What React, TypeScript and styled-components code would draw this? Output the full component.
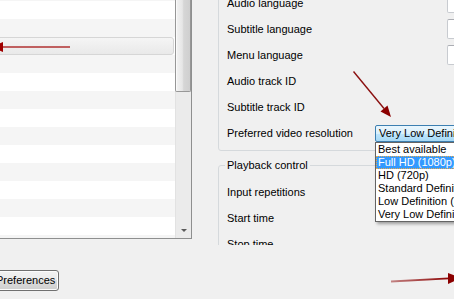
import React, { FC } from "react"
import styled, { createGlobalStyle } from "styled-components"

const GlobalStyle = createGlobalStyle`
  html, body {
    margin: 0;
    padding: 0;
    background: #f0f0f0;
  }
  body {
    font-family: "Liberation Sans", Arial, sans-serif;
    font-size: 11px;
    color: #000;
  }
`

const listShades = ["grey", "white", "grey", "selected", "grey", "white", "grey", "white", "grey", "white", "grey", "white", "grey", "white", "grey"]

const languageRows = [
  { label: "Audio language", control: "input" },
  { label: "Subtitle language", control: "input" },
  { label: "Menu language", control: "input" },
  { label: "Audio track ID", control: "none" },
  { label: "Subtitle track ID", control: "none" },
  { label: "Preferred video resolution", control: "combo" },
]

const playbackRows = ["Input repetitions", "Start time", "Stop time"]

const resolutions = [
  "Best available",
  "Full HD (1080p)",
  "HD (720p)",
  "Standard Definition (576 or 480 lines)",
  "Low Definition (360 lines)",
  "Very Low Definition (240 lines)",
]

const Arrows: FC = () => (
  <Overlay width="454" height="299" viewBox="0 0 454 299">
    <defs>
      <linearGradient id="fade" x1="391" y1="0" x2="450" y2="0" gradientUnits="userSpaceOnUse">
        <stop offset="0" stopColor="#8b0000" stopOpacity="0.45" />
        <stop offset="1" stopColor="#8b0000" stopOpacity="1" />
      </linearGradient>
    </defs>
    {/* pointing at the list row */}
    <line x1="70" y1="47" x2="0" y2="47" stroke="#b03030" strokeOpacity="0.75" strokeWidth="2" />
    <polygon points="-9,47 3,42 3,52" fill="#a00000" />
    {/* pointing at the resolution combo */}
    <line x1="353.5" y1="71.5" x2="384" y2="108.5" stroke="#8b1010" strokeWidth="1.4" />
    <polygon points="391,117 380.5,111.4 387.5,105.6" fill="#8b0000" />
    {/* pointing off to the right */}
    <line x1="391" y1="281.5" x2="449" y2="278.3" stroke="url(#fade)" strokeWidth="1.8" />
    <polygon points="448,273 448,284 461,278" fill="#8b0000" />
  </Overlay>
)

export default function App() {
  return (
    <Screen>
      <GlobalStyle />
      <Top>
        <ListBox>
          <Items>
            <ItemsInner>
              {listShades.map((s, i) => (
                <Item key={i} shade={s} />
              ))}
            </ItemsInner>
          </Items>
          <ScrollBar>
            <Thumb />
            <Track />
            <DownButton>
              <DownGlyph />
            </DownButton>
          </ScrollBar>
        </ListBox>

        <RightPanel>
          <UpperGroup>
            {languageRows.map(r => (
              <Row key={r.label}>
                <Label>{r.label}</Label>
                {r.control === "input" && <TextInput offset={72} />}
                {r.control === "combo" && (
                  <Combo>
                    Very Low Definition (240 lines)
                    <Popup>
                      {resolutions.map(res => (
                        <PopupItem key={res} selected={res === "Full HD (1080p)"}>
                          {res}
                        </PopupItem>
                      ))}
                    </Popup>
                  </Combo>
                )}
              </Row>
            ))}
          </UpperGroup>

          <Group>
            <Legend>Playback control</Legend>
            {playbackRows.map(r => (
              <Row key={r}>
                <Label>{r}</Label>
              </Row>
            ))}
          </Group>
        </RightPanel>
      </Top>

      <Footer>
        <Button>Preferences</Button>
      </Footer>

      <Arrows />
    </Screen>
  )
}

//---------------------------STYLES-------------------------------------------//

const Screen = styled.div`
  position: relative;
  width: 454px;
  height: 299px;
  overflow: hidden;
  background: #f0f0f0;
  display: flex;
  flex-direction: column;
`

const Top = styled.div`
  display: flex;
  align-items: flex-start;
  height: 245px;
  flex-shrink: 0;
`

const ListBox = styled.div`
  width: 192px;
  height: 239px;
  box-sizing: border-box;
  display: flex;
  flex-shrink: 0;
  background: #fff;
  border-right: 1px solid #8e8f8f;
  border-bottom: 1px solid #8e8f8f;
`

const Items = styled.div`
  width: 175px;
  overflow: hidden;
`

const ItemsInner = styled.div`
  margin-top: -17px;
`

interface ItemProps {
  shade: string
}

const Item = styled.div<ItemProps>`
  height: 18px;
  box-sizing: border-box;
  background: ${p => (p.shade === "grey" ? "#f5f5f5" : "#ffffff")};
  ${p =>
    p.shade === "selected" &&
    `
    margin: 0 1px 0 -4px;
    border: 1px solid #d6d6d6;
    border-radius: 3px;
    background: linear-gradient(#f5f5f5, #e9e9e9);
  `}
`

const ScrollBar = styled.div`
  width: 16px;
  display: flex;
  flex-direction: column;
  background: #ebebeb;
  box-sizing: border-box;
  border-left: 1px solid #e2e2e2;
`

const Thumb = styled.div`
  height: 92px;
  margin-left: -1px;
  box-sizing: border-box;
  border: 1px solid #979797;
  border-top: none;
  border-radius: 0 0 2px 2px;
  background: linear-gradient(to right, #f3f3f3, #e6e6e6 45%, #d6d6d6 55%, #cfcfcf);
  box-shadow: inset 1px 0 0 #fafafa;
`

const Track = styled.div`
  flex: 1;
`

const DownButton = styled.div`
  height: 16px;
  display: flex;
  align-items: center;
  justify-content: center;
`

const DownGlyph = styled.div`
  width: 0;
  height: 0;
  border-left: 3px solid transparent;
  border-right: 3px solid transparent;
  border-top: 3px solid #5a5a5a;
`

const RightPanel = styled.div`
  position: relative;
  margin-left: 26px;
  width: 236px;
  height: 245px;
  overflow: hidden;
`

const UpperGroup = styled.div`
  width: 320px;
  margin-top: -14px;
  padding: 3px 0 4px 8px;
  border: 1px solid #d5d9dc;
  border-radius: 3px;
`

const Group = styled.fieldset`
  width: 320px;
  margin: 8px 0 0 0;
  padding: 7px 0 0 8px;
  border: 1px solid #d5d9dc;
  border-radius: 3px;
  min-width: 0;
`

const Legend = styled.legend`
  padding: 0 2px;
  margin-left: -2px;
  height: 13px;
  line-height: 13px;
`

const Row = styled.div`
  height: 26px;
  display: flex;
  align-items: center;
`

const Label = styled.div`
  width: 148px;
  flex-shrink: 0;
  white-space: nowrap;
`

interface InputProps {
  offset: number
}

const TextInput = styled.div<InputProps>`
  margin-left: ${p => p.offset}px;
  width: 120px;
  height: 20px;
  box-sizing: border-box;
  background: #fff;
  border: 1px solid #c8cbd0;
  border-top-color: #abadb3;
  border-radius: 2px;
`

const Combo = styled.div`
  position: relative;
  width: 150px;
  height: 17px;
  box-sizing: border-box;
  padding-left: 3px;
  line-height: 15px;
  white-space: nowrap;
  border: 1px solid #3c7fb1;
  border-radius: 2px;
  background: linear-gradient(#eaf6fd, #d9f0fc 50%, #bee6fd 50%, #a7d9f5);
`

const Popup = styled.div`
  position: absolute;
  top: calc(100% + 1px);
  left: -1px;
  width: 150px;
  background: #fff;
  border: 1px solid #646464;
  box-shadow: 2px 2px 3px rgba(0, 0, 0, 0.35);
  z-index: 3;
`

interface PopupItemProps {
  selected?: boolean
}

const PopupItem = styled.div<PopupItemProps>`
  height: 13px;
  line-height: 13px;
  padding-left: 2px;
  white-space: nowrap;
  background: ${p => (p.selected ? "#3399ff" : "transparent")};
  color: ${p => (p.selected ? "#fff" : "#000")};
  outline: ${p => (p.selected ? "1px dotted #e8a848" : "none")};
  outline-offset: -1px;
`

const Footer = styled.div`
  flex: 1;
  padding-top: 25px;
  display: flex;
  align-items: flex-start;
`

const Button = styled.div`
  margin-left: -8px;
  height: 21px;
  box-sizing: border-box;
  padding: 0 3px;
  line-height: 19px;
  border: 1px solid #707070;
  border-radius: 3px;
  background: linear-gradient(#f2f2f2, #ebebeb 50%, #dddddd 50%, #cfcfcf);
  box-shadow: inset 0 0 0 1px #fcfcfc;
`

const Overlay = styled.svg`
  position: absolute;
  left: 0;
  top: 0;
  pointer-events: none;
  overflow: visible;
  z-index: 5;
`
